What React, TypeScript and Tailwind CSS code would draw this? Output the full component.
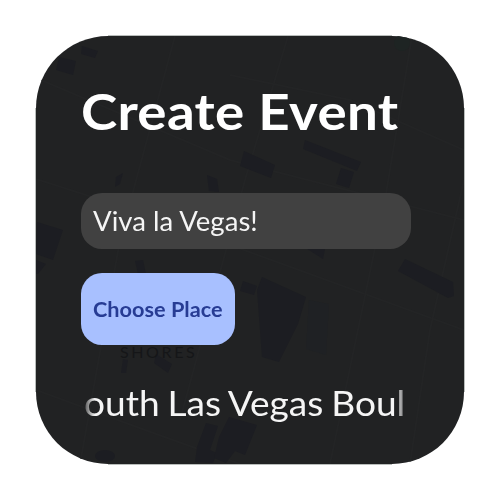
const buildings: string[] = [
  "82,46 98,51 95,58 81,54",
  "59,57 76,61 73,75 56,70",
  "244,151 275,165 271,178 240,166",
  "305,140 361,162 357,171 303,149",
  "341,168 354,172 349,188 336,184",
  "116,177 123,173 120,184 115,187",
  "207,175 217,179 219,192 209,191",
  "37,222 63,230 53,260 36,254",
  "36,260 46,264 38,274 36,274",
  "304,247 325,249 323,259",
  "135,261 143,260 146,274 138,274",
  "405,259 453,282 454,296 448,298 398,271",
  "243,281 257,286 254,295 240,291",
  "262,277 306,297 298,324 279,362 262,357 257,290",
  "156,354 172,364 168,373 154,363",
  "123,359 128,360 126,373 121,373",
  "206,423 218,426 210,450 217,453 213,463 195,462 197,447",
  "229,417 257,425 245,455 235,451 226,463 214,458 219,437",
];

const roads: string[] = [
  "M36 179 L145 214 L464 330",
  "M175 36 L120 240 L80 464",
  "M36 390 L145 430 L240 464",
  "M288 36 L245 180 L180 420",
  "M412 36 L385 200 L330 464",
  "M230 75 L350 100 L464 150",
  "M464 180 L430 330 L410 464",
  "M36 78 L230 160 L464 220",
];

function MapBackdrop() {
  return (
    <svg
      className="pointer-events-none absolute inset-0 h-full w-full"
      viewBox="36 36 428 428"
      aria-hidden="true"
    >
      <g fill="none" stroke="#232425" strokeWidth="2">
        {roads.map((d) => (
          <path key={d} d={d} />
        ))}
      </g>
      <g fill="#1c1d22">
        {buildings.map((points) => (
          <polygon key={points} points={points} />
        ))}
        <ellipse cx="105" cy="456" rx="10" ry="6" />
        <polygon points="309,300 329,304 326,355 306,349" fill="#1f2124" />
        <circle cx="402" cy="43" r="8" fill="#1e2423" />
      </g>
    </svg>
  );
}

export default function App() {
  return (
    <main className="flex h-[500px] w-[500px] items-center justify-center bg-white font-['Lato','Open_Sans',sans-serif]">
      <div className="relative shrink-0">
        <div className="pointer-events-none absolute -inset-y-px inset-x-[72px] bg-[#b9bdbb]" />
        <div className="pointer-events-none absolute -inset-x-px inset-y-[72px] bg-[#b9bdbb]" />
        <section className="relative h-[428px] w-[428px] overflow-hidden rounded-[72px] bg-[#212223]">
          <MapBackdrop />
          <div className="relative flex h-full flex-col pr-[53px] pl-[45px]">
            <h1 className="mt-[45px] h-[60px] origin-left scale-x-[1.094] text-[50px] leading-[60px] font-bold tracking-[0.3px] whitespace-nowrap text-white">
              Create Event
            </h1>
            <div className="mt-[52px] flex h-14 w-[330px] items-center rounded-[21px] bg-[#414141] px-3 text-[26px] whitespace-nowrap text-[#f5f5f5]">
              <span className="origin-left scale-x-[1.06]">Viva la Vegas!</span>
            </div>
            <div className="relative mt-6 h-[72px]">
              <span className="absolute top-[70px] left-[39px] text-[16px] leading-[18px] tracking-[2.6px] text-[#151618]">
                SHORES
              </span>
              <button className="relative flex h-[72px] w-[154px] items-center rounded-[21px] bg-[#a8c0ff] px-3 text-[20px] font-bold whitespace-nowrap text-[#273c94]">
                <span className="origin-left scale-x-[1.085]">Choose Place</span>
              </button>
            </div>
            <div className="mt-9 flex h-11 w-[330px] mask-[linear-gradient(to_right,transparent,black_14px,black_314px,transparent)] text-[34px] leading-[44px] whitespace-nowrap text-[#f5f5f5]">
              <span className="ml-[3px] origin-left scale-x-[1.091] [word-spacing:-1.5px]">
                outh Las Vegas Boul
              </span>
            </div>
          </div>
        </section>
      </div>
    </main>
  );
}
